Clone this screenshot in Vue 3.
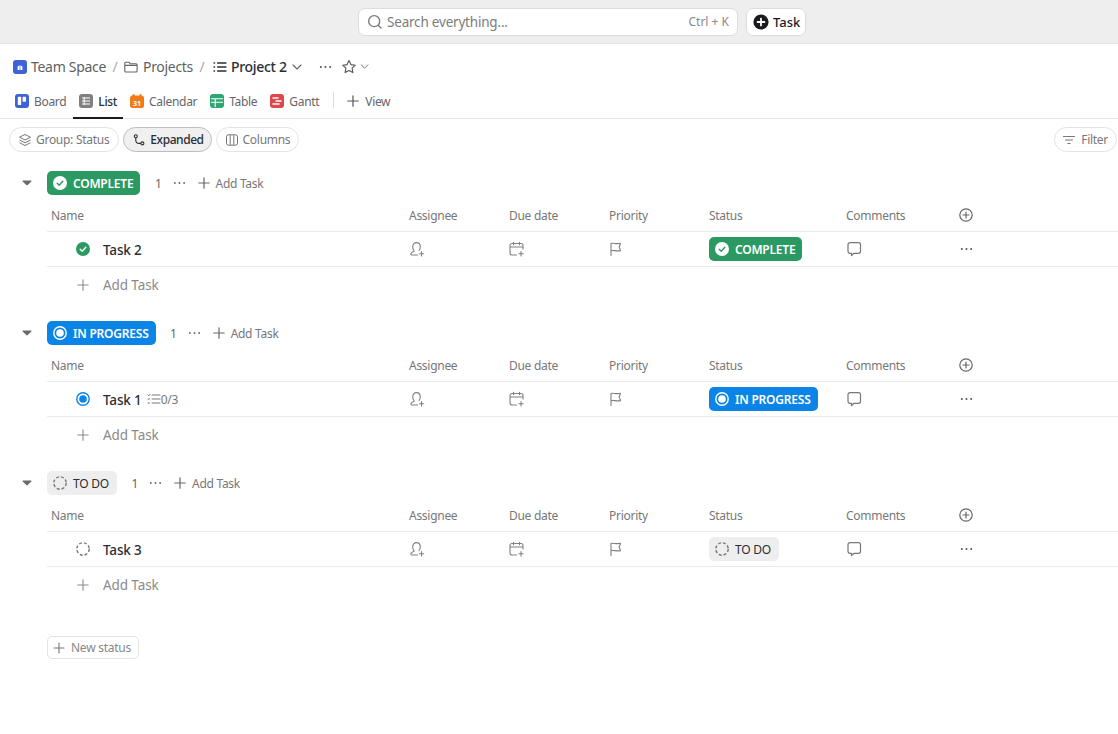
<script setup>
const tabs = [
  { name: 'Board', icon: 'board' },
  { name: 'List', icon: 'list', active: true },
  { name: 'Calendar', icon: 'calendar' },
  { name: 'Table', icon: 'table' },
  { name: 'Gantt', icon: 'gantt' }
]
const columns = ['Assignee', 'Due date', 'Priority', 'Status', 'Comments']
const groups = [
  { key: 'complete', label: 'COMPLETE', task: 'Task 2' },
  { key: 'progress', label: 'IN PROGRESS', task: 'Task 1', sub: '0/3' },
  { key: 'todo', label: 'TO DO', task: 'Task 3' }
]
</script>

<template>
  <div class="page">
    <header class="topbar">
      <div class="search">
        <svg class="i16" viewBox="0 0 16 16" fill="none" stroke="#777" stroke-width="1.3" stroke-linecap="round"><circle cx="7.2" cy="7.2" r="5.5"/><path d="M11.2 11.2l2.8 2.8"/></svg>
        <span class="search-text">Search everything...</span>
        <span class="kbd">Ctrl + K</span>
      </div>
      <div class="task-btn">
        <svg class="i16" viewBox="0 0 16 16"><circle cx="8" cy="8" r="7.6" fill="#1b1b1f"/><path d="M8 4.6v6.8M4.6 8h6.8" stroke="#fff" stroke-width="1.8" stroke-linecap="round"/></svg>
        <span>Task</span>
      </div>
    </header>

    <nav class="crumbs">
      <svg class="i14" viewBox="0 0 14 14"><rect width="14" height="14" rx="3" fill="#3f62d6"/><path d="M4.6 10V6.6l2.1-1.3V10zM7.4 10V5.3l2 1.2V10z" fill="#fff"/></svg>
      <span class="crumb first">Team Space</span>
      <span class="slash">/</span>
      <svg class="i14" viewBox="0 0 14 14" fill="none" stroke="#666" stroke-width="1.1" stroke-linejoin="round"><path d="M.8 3.2a1 1 0 0 1 1-1h3l1.4 1.6h5.9a1 1 0 0 1 1 1v6.2a1 1 0 0 1-1 1H1.8a1 1 0 0 1-1-1zM.8 5.4h12.4"/></svg>
      <span class="crumb">Projects</span>
      <span class="slash second">/</span>
      <svg class="i14" viewBox="0 0 14 14" fill="none" stroke="#2a2e34" stroke-width="1.3" stroke-linecap="round"><path d="M4.6 3H13M4.6 7H13M4.6 11H13M1 3h.6M1 7h.6M1 11h.6"/></svg>
      <span class="crumb current">Project 2</span>
      <svg class="chev" viewBox="0 0 10 6" fill="none" stroke="#666" stroke-width="1.1" stroke-linecap="round" stroke-linejoin="round"><path d="M1 1l4 4 4-4"/></svg>
      <svg class="more" viewBox="0 0 14 4" fill="#555"><circle cx="2" cy="2" r="1.1"/><circle cx="7" cy="2" r="1.1"/><circle cx="12" cy="2" r="1.1"/></svg>
      <svg class="star" viewBox="0 0 16 16" fill="none" stroke="#555" stroke-width="1.1" stroke-linejoin="round"><path d="M8 1.6l1.9 4 4.4.6-3.2 3 .8 4.4L8 11.5l-3.9 2.1.8-4.4-3.2-3 4.4-.6z"/></svg>
      <svg class="chev small" viewBox="0 0 10 6" fill="none" stroke="#666" stroke-width="1.1" stroke-linecap="round" stroke-linejoin="round"><path d="M1 1l4 4 4-4"/></svg>
    </nav>

    <div class="tabs">
      <div v-for="t in tabs" :key="t.name" class="tab" :class="{ active: t.active }">
        <svg v-if="t.icon === 'board'" class="i14" viewBox="0 0 14 14"><rect width="14" height="14" rx="3" fill="#3f62d6"/><rect x="2.8" y="2.8" width="3.4" height="8.2" rx=".6" fill="#fff"/><rect x="7.6" y="2.8" width="3.4" height="5" rx=".6" fill="#fff"/></svg>
        <svg v-else-if="t.icon === 'list'" class="i14" viewBox="0 0 14 14"><rect width="14" height="14" rx="3" fill="#808080"/><path d="M3 4h8M3 7h8M3 10h8M5.2 3v8" stroke="#fff" stroke-width="1"/></svg>
        <svg v-else-if="t.icon === 'calendar'" class="i14" viewBox="0 0 14 14"><rect y="1.5" width="14" height="12.5" rx="2.5" fill="#f27a1a"/><rect x="2.5" y="0" width="2" height="3.5" rx="1" fill="#f27a1a"/><rect x="9.5" y="0" width="2" height="3.5" rx="1" fill="#f27a1a"/><text x="7" y="11.5" text-anchor="middle" class="cal-num">31</text></svg>
        <svg v-else-if="t.icon === 'table'" class="i14" viewBox="0 0 14 14"><rect width="14" height="14" rx="3" fill="#2fa56f"/><path d="M1 4.7h12M1 8.2h12M5.2 4.7V13" stroke="#fff" stroke-width="1.1"/></svg>
        <svg v-else class="i14" viewBox="0 0 14 14"><rect width="14" height="14" rx="3" fill="#e0474c"/><path d="M3 4h5M6 7h5M3 10h6" stroke="#fff" stroke-width="1.5" stroke-linecap="round"/></svg>
        <span>{{ t.name }}</span>
      </div>
      <span class="tab-divider"></span>
      <div class="tab view">
        <svg class="i12" viewBox="0 0 12 12" stroke="#555" stroke-width="1.2" stroke-linecap="round"><path d="M6 .8v10.4M.8 6h10.4"/></svg>
        <span>View</span>
      </div>
    </div>

    <div class="filters">
      <div class="chip group-chip">
        <svg class="i14" viewBox="0 0 14 14" fill="none" stroke="#777" stroke-width="1" stroke-linejoin="round"><path d="M7 1.500l5.500 2.700L7 7 1.500 4.200zM1.500 7L7 9.800 12.500 7M1.500 9.700L7 12.500l5.500-2.800"/></svg>
        <span>Group: Status</span>
      </div>
      <div class="chip on">
        <svg class="i12" viewBox="0 0 12 12" fill="none" stroke="#2a2e34" stroke-width="1.1"><circle cx="2.8" cy="2.2" r="1.5"/><circle cx="9.4" cy="9.4" r="1.5"/><path d="M2.8 3.7v2.8a2.900 2.900 0 0 0 2.900 2.900h2.200"/></svg>
        <span>Expanded</span>
      </div>
      <div class="chip">
        <svg class="i14" viewBox="0 0 14 14" fill="none" stroke="#777" stroke-width="1"><rect x="1.5" y="1.8" width="11" height="10.4" rx="2"/><path d="M5.2 1.8v10.4M8.8 1.8v10.4"/></svg>
        <span>Columns</span>
      </div>
      <div class="chip filter">
        <svg class="i12" viewBox="0 0 12 12" stroke="#777" stroke-width="1" stroke-linecap="round"><path d="M.5 2.500h11M2.500 6h7M4.800 9.500h2.400"/></svg>
        <span>Filter</span>
      </div>
    </div>

    <section v-for="g in groups" :key="g.key" class="group">
      <div class="group-head">
        <svg class="caret" viewBox="0 0 10 6"><path d="M1 .6h8a.6.6 0 0 1 .4 1L5.4 5.3a.6.6 0 0 1-.8 0L.6 1.600a.6.6 0 0 1 .4-1z" fill="#6c6c6c"/></svg>
        <div class="pill" :class="g.key">
          <svg v-if="g.key === 'complete'" class="i14" viewBox="0 0 14 14"><circle cx="7" cy="7" r="7" fill="#fff"/><path d="M4.2 7.2l2 2 3.600-4" fill="none" stroke="#2a9a62" stroke-width="1.4" stroke-linecap="round" stroke-linejoin="round"/></svg>
          <svg v-else-if="g.key === 'progress'" class="i14" viewBox="0 0 14 14"><circle cx="7" cy="7" r="6.2" fill="none" stroke="#fff" stroke-width="1.4"/><circle cx="7" cy="7" r="3.8" fill="#fff"/></svg>
          <svg v-else class="i14" viewBox="0 0 14 14"><circle cx="7" cy="7" r="6.2" fill="none" stroke="#777" stroke-width="1.4" stroke-dasharray="3 1.9"/></svg>
          <span>{{ g.label }}</span>
        </div>
        <span class="count">1</span>
        <svg class="more" viewBox="0 0 14 4" fill="#666"><circle cx="2" cy="2" r="1"/><circle cx="7" cy="2" r="1"/><circle cx="12" cy="2" r="1"/></svg>
        <div class="head-add">
          <svg class="i12" viewBox="0 0 12 12" stroke="#666" stroke-width="1.2" stroke-linecap="round"><path d="M6 .8v10.4M.8 6h10.4"/></svg>
          <span>Add Task</span>
        </div>
      </div>

      <div class="grid head">
        <span class="name-col">Name</span>
        <span v-for="c in columns" :key="c">{{ c }}</span>
        <span class="end-col">
          <svg class="i14" viewBox="0 0 14 14" fill="none" stroke="#666" stroke-width="1.2" stroke-linecap="round"><circle cx="7" cy="7" r="6.2"/><path d="M7 4v6M4 7h6"/></svg>
        </span>
      </div>

      <div class="grid row">
        <div class="task-name">
          <svg v-if="g.key === 'complete'" class="i14" viewBox="0 0 14 14"><circle cx="7" cy="7" r="7" fill="#2a9a62"/><path d="M4.2 7.2l2 2 3.600-4" fill="none" stroke="#fff" stroke-width="1.4" stroke-linecap="round" stroke-linejoin="round"/></svg>
          <svg v-else-if="g.key === 'progress'" class="i14" viewBox="0 0 14 14"><circle cx="7" cy="7" r="6.2" fill="none" stroke="#0b84e8" stroke-width="1.4"/><circle cx="7" cy="7" r="3.8" fill="#0b84e8"/></svg>
          <svg v-else class="i14" viewBox="0 0 14 14"><circle cx="7" cy="7" r="6.2" fill="none" stroke="#777" stroke-width="1.4" stroke-dasharray="3 1.9"/></svg>
          <span class="task-title">{{ g.task }}</span>
          <span v-if="g.sub" class="sub">
            <svg class="i14" viewBox="0 0 14 14" fill="none" stroke="#777" stroke-width="1" stroke-linecap="round"><path d="M5 3h8M5 7h8M5 11h8M1 3l.8.8L3 2.400M1 7h1.600M1 11h1.600"/></svg>
            {{ g.sub }}
          </span>
        </div>
        <svg class="i16 cell-icon" viewBox="0 0 16 16" fill="none" stroke="#808080" stroke-width="1.1" stroke-linecap="round" stroke-linejoin="round"><path d="M8.600 14H2.800c-.8 0-1.200-.7-.9-1.300.5-1 1.500-1.800 2.700-2.200.5-.2.600-.6.300-1C4.200 8.600 3.700 7.400 3.700 6c0-2.700 1.500-4.400 3.800-4.400s3.800 1.700 3.800 4.400c0 1.400-.5 2.600-1.200 3.500"/><path d="M12.500 10.500v4.400M10.300 12.700h4.400"/></svg>
        <svg class="i16 cell-icon" viewBox="0 0 16 16" fill="none" stroke="#808080" stroke-width="1.1" stroke-linecap="round" stroke-linejoin="round"><path d="M7.500 14H3a2 2 0 0 1-2-2V4.500a2 2 0 0 1 2-2h9a2 2 0 0 1 2 2V8M1 6h13M4.500 1.300v2.400M10.500 1.300v2.400"/><path d="M12 10.500v4.400M9.800 12.700h4.400"/></svg>
        <svg class="i16 cell-icon" viewBox="0 0 16 16" fill="none" stroke="#808080" stroke-width="1.1" stroke-linecap="round" stroke-linejoin="round"><path d="M2 14.500V2.500c3-1 4.500 1 9.500-.2l-1.300 3.700 1.300 3.600c-4 1.100-6.500-.8-9.500 0"/></svg>
        <div>
          <div class="pill" :class="g.key">
            <svg v-if="g.key === 'complete'" class="i14" viewBox="0 0 14 14"><circle cx="7" cy="7" r="7" fill="#fff"/><path d="M4.2 7.2l2 2 3.600-4" fill="none" stroke="#2a9a62" stroke-width="1.4" stroke-linecap="round" stroke-linejoin="round"/></svg>
            <svg v-else-if="g.key === 'progress'" class="i14" viewBox="0 0 14 14"><circle cx="7" cy="7" r="6.2" fill="none" stroke="#fff" stroke-width="1.4"/><circle cx="7" cy="7" r="3.8" fill="#fff"/></svg>
            <svg v-else class="i14" viewBox="0 0 14 14"><circle cx="7" cy="7" r="6.2" fill="none" stroke="#777" stroke-width="1.4" stroke-dasharray="3 1.9"/></svg>
            <span>{{ g.label }}</span>
          </div>
        </div>
        <svg class="i16 cell-icon" viewBox="0 0 16 16" fill="none" stroke="#777" stroke-width="1.2" stroke-linejoin="round"><path d="M4 1.700h8.500a2 2 0 0 1 2 2v6.600a2 2 0 0 1-2 2H8l-2.500 2.200v-2.200H4a2 2 0 0 1-2-2V3.700a2 2 0 0 1 2-2z"/></svg>
        <span class="end-col">
          <svg class="more" viewBox="0 0 14 4" fill="#555"><circle cx="2" cy="2" r="1.1"/><circle cx="7" cy="2" r="1.1"/><circle cx="12" cy="2" r="1.1"/></svg>
        </span>
      </div>

      <div class="add-row">
        <svg class="i12" viewBox="0 0 12 12" stroke="#8a8a8a" stroke-width="1.1" stroke-linecap="round"><path d="M6 .8v10.4M.8 6h10.4"/></svg>
        <span>Add Task</span>
      </div>
    </section>

    <div class="new-status">
      <svg class="i12" viewBox="0 0 12 12" stroke="#777" stroke-width="1.1" stroke-linecap="round"><path d="M6 1v10M1 6h10"/></svg>
      <span>New status</span>
    </div>
  </div>
</template>

<style scoped>
.page {
  width: 1118px;
  height: 734px;
  overflow: hidden;
  background: #fff;
  color: #2a2e34;
  font-family: "Noto Sans", "Open Sans", sans-serif;
  font-size: 12px;
  letter-spacing: -.28px;
}
svg { flex: none; display: block; }
.i12 { width: 12px; height: 12px; }
.i14 { width: 14px; height: 14px; }
.i16 { width: 16px; height: 16px; }
.more { width: 13px; height: 4px; }

.topbar {
  height: 44px;
  box-sizing: border-box;
  background: #eeeeee;
  border-bottom: 1px solid #e4e4e4;
  display: flex;
  align-items: center;
  padding: 0 0 0 358px;
  gap: 8px;
}
.search, .task-btn {
  height: 28px;
  box-sizing: border-box;
  background: #fff;
  border: 1px solid #dcdcdc;
  border-radius: 7px;
  display: flex;
  align-items: center;
}
.search { width: 380px; padding: 0 8px; gap: 4px; }
.search-text { font-size: 13.5px; color: #7c7c7c; flex: 1; letter-spacing: -.2px; }
.kbd { font-size: 12px; color: #8a8a8a; letter-spacing: 0; }
.task-btn { width: 60px; padding: 0 6px; gap: 4px; font-size: 13px; font-weight: 500; color: #1b1b1f; letter-spacing: 0; }

.crumbs {
  height: 46px;
  box-sizing: border-box;
  padding: 0 0 1px 13px;
  display: flex;
  align-items: center;
  font-size: 14px;
  letter-spacing: -.3px;
}
.crumb { margin-left: 5px; color: #5f5f5f; }
.crumbs .crumb.first { margin-left: 4px; }
.crumb.current { color: #2a2e34; font-weight: 500; margin-left: 4px; }
.slash { color: #aaa; margin: 0 6.5px; }
.slash.second { margin-right: 8.5px; }
.chev { width: 10px; height: 6px; margin-left: 5px; }
.crumbs .more { margin-left: 17px; }
.star { width: 16px; height: 16px; margin-left: 9px; }
.chev.small { width: 9px; height: 5px; margin-left: 3px; }

.tabs {
  height: 29px;
  box-sizing: border-box;
  border-bottom: 1px solid #e6e6e6;
  display: flex;
  align-items: stretch;
  padding-left: 9px;
  gap: 1px;
  letter-spacing: -.32px;
}
.tab {
  display: flex;
  align-items: center;
  gap: 5px;
  padding: 0 6px 5px;
  margin-bottom: -1px;
  color: #666;
  border-bottom: 2px solid transparent;
}
.tab.active { color: #2a2e34; border-bottom-color: #1b1b1f; font-weight: 500; }
.cal-num { font-size: 7px; font-weight: 700; fill: #fff; font-family: "Noto Sans", sans-serif; letter-spacing: 0; }
.tab-divider { width: 1px; height: 16px; background: #dedede; margin: 2px 6px 0 7px; }
.tab.view { gap: 6px; }

.filters {
  display: flex;
  gap: 4px;
  padding: 8px 1px 0 9px;
  height: 25px;
  margin-bottom: 19px;
}
.chip {
  height: 25px;
  box-sizing: border-box;
  border: 1px solid #e3e3e3;
  border-radius: 13px;
  padding: 0 8px;
  display: flex;
  align-items: center;
  gap: 4px;
  color: #777;
}
.chip.group-chip { padding-right: 9px; }
.chip.on { background: #f0f0f0; border-color: #bdbdbd; color: #2a2e34; font-weight: 500; gap: 5px; padding: 0 7px 0 9px; letter-spacing: -.45px; }
.chip.filter { margin-left: auto; gap: 6px; }

.group { height: 150px; }
.group-head {
  height: 24px;
  display: flex;
  align-items: center;
  padding-left: 22px;
}
.caret { width: 10px; height: 6px; margin-right: 15px; }
.pill {
  display: inline-flex;
  align-items: center;
  height: 24px;
  padding: 0 7px 0 6px;
  gap: 6px;
  border-radius: 5px;
  font-weight: 600;
  letter-spacing: -.22px;
  vertical-align: top;
}
.pill.complete { background: #2a9a62; color: #fff; }
.pill.progress { background: #0b84e8; color: #fff; }
.pill.todo { background: #eeeeee; color: #2a2e34; font-weight: 400; padding-right: 8px; }
.count { margin-left: 14.5px; color: #666; }
.group-head .more { margin-left: 11px; }
.head-add {
  display: flex;
  align-items: center;
  gap: 6px;
  margin-left: 12px;
  color: #777;
}

.grid {
  display: grid;
  grid-template-columns: 358px 100px 100px 100px 137px 113px 14px;
  align-items: center;
  margin-left: 47px;
  padding-left: 4px;
  border-bottom: 1px solid #eaeaea;
  box-sizing: border-box;
}
.grid.head {
  height: 37px;
  color: #777;
  padding-top: 5px;
}
.grid.head .end-col { margin-top: -2px; }
.grid.row { height: 35px; }
.end-col { display: flex; justify-content: center; }
.task-name {
  display: flex;
  align-items: center;
  padding-left: 25px;
}
.task-title {
  margin-left: 13px;
  padding-top: 2px;
  font-size: 13.5px;
  font-weight: 500;
  color: #2a2e34;
  letter-spacing: -.15px;
}
.sub {
  display: flex;
  align-items: center;
  margin-left: 5px;
  gap: 0;
  color: #777;
  letter-spacing: -.2px;
}
.add-row {
  height: 36px;
  display: flex;
  align-items: center;
  padding-left: 77px;
  gap: 14px;
  font-size: 13.5px;
  color: #8a8a8a;
  letter-spacing: -.1px;
}

.new-status {
  margin: 15px 0 0 47px;
  width: 92px;
  height: 23px;
  box-sizing: border-box;
  border: 1px solid #e3e3e3;
  border-radius: 5px;
  display: flex;
  align-items: center;
  gap: 6px;
  padding-left: 5px;
  color: #888;
  letter-spacing: -.25px;
}
</style>
